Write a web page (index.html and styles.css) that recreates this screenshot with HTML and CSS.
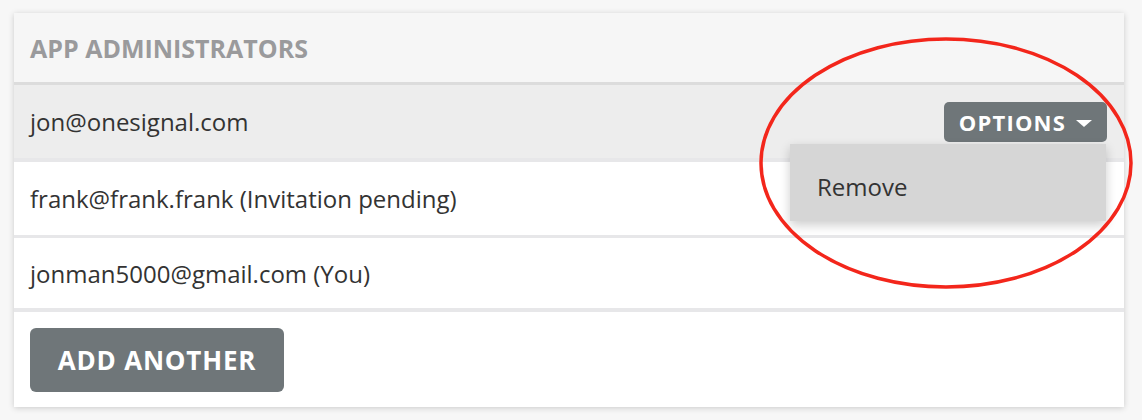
FILE: index.html
```html
<!DOCTYPE html>
<html>
<head>
<meta charset="utf-8">
<link rel="stylesheet" href="styles.css">
</head>
<body>
<div class="page">
  <div class="card">
    <div class="card-header">APP ADMINISTRATORS</div>
    <div class="row row-active">
      <span class="email">jon@onesignal.com</span>
      <div class="options">
        <button class="options-btn">OPTIONS <span class="caret"></span></button>
        <div class="menu">
          <div class="menu-item">Remove</div>
        </div>
      </div>
    </div>
    <div class="row">
      <span class="email">frank@frank.frank (Invitation pending)</span>
    </div>
    <div class="row row-last">
      <span class="email">jonman5000@gmail.com (You)</span>
    </div>
    <div class="card-footer">
      <button class="add-btn">ADD ANOTHER</button>
    </div>
  </div>
  <svg class="annotation" width="1142" height="420" viewBox="0 0 1142 420">
    <ellipse cx="946" cy="163" rx="185" ry="124" fill="none" stroke="#f3261b" stroke-width="3.5"/>
  </svg>
</div>
</body>
</html>
```
FILE: styles.css
```css
* { box-sizing: border-box; }
html, body { margin: 0; padding: 0; }
body {
  background: #f7f7f7;
  font-family: "Open Sans", "Lato", sans-serif;
  color: #333;
  width: 1142px;
  height: 420px;
  overflow: hidden;
}
.page {
  position: relative;
  padding: 13px 18px 12px 14px;
  height: 420px;
}
.card {
  background: #fff;
  box-shadow: 0 1px 6px rgba(0,0,0,0.18);
  width: 1110px;
}
.card-header {
  height: 72px;
  background: #f6f6f6;
  border-bottom: 3px solid #dcdcdc;
  padding: 0 16px;
  display: flex;
  align-items: center;
  font-weight: 700;
  font-size: 25px;
  color: #9a9a9c;
}
.row {
  height: 76px;
  border-bottom: 3px solid #e7e7e9;
  padding: 0 16px;
  display: flex;
  align-items: center;
  justify-content: space-between;
  font-size: 24px;
  background: #fff;
}
.row-active {
  background: #ededed;
  height: 77px;
  border-bottom-width: 4px;
}
.row-last { height: 74px; border-bottom-width: 4px; }
.email { color: #333; }
.options { position: relative; }
.options-btn {
  background: #6f7679;
  color: #fff;
  border: none;
  border-radius: 5px;
  height: 40px;
  padding: 0 15px;
  font-family: inherit;
  font-weight: 700;
  font-size: 22px;
  letter-spacing: 1.2px;
  display: flex;
  align-items: center;
  gap: 10px;
  margin-right: 1px;
}
.caret {
  width: 0; height: 0;
  border-left: 8px solid transparent;
  border-right: 8px solid transparent;
  border-top: 7px solid #fff;
  margin-top: 4px;
}
.menu {
  position: absolute;
  top: 42px;
  right: 2px;
  width: 316px;
  background: #d6d6d6;
  box-shadow: 0 4px 10px rgba(0,0,0,0.2);
  z-index: 2;
}
.menu-item {
  height: 77px;
  display: flex;
  align-items: center;
  padding: 9px 0 0 27px;
  font-size: 24px;
  color: #333;
}
.card-footer {
  height: 95px;
  padding: 16px 16px;
}
.add-btn {
  background: #6f7679;
  color: #fff;
  border: none;
  border-radius: 6px;
  width: 254px;
  height: 64px;
  font-family: inherit;
  font-weight: 700;
  font-size: 26px;
  letter-spacing: 0.8px;
}
.annotation {
  position: absolute;
  left: 0; top: 0;
  pointer-events: none;
  z-index: 5;
}
```
